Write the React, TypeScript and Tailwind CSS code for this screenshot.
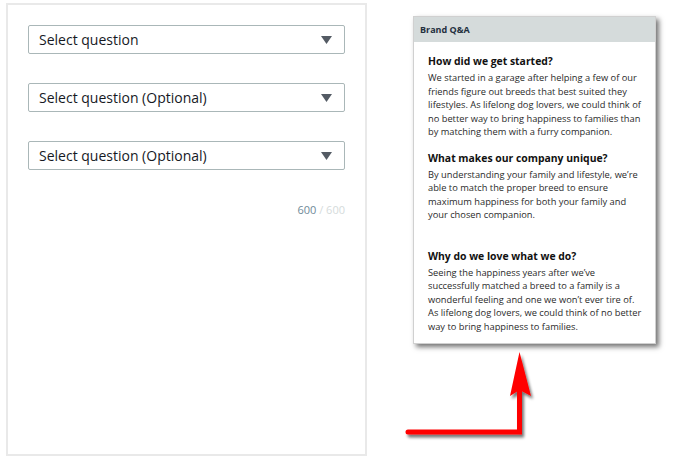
import React from "react";

const selects = ["Select question", "Select question (Optional)", "Select question (Optional)"];

const qa = [
  {
    q: "How did we get started?",
    lines: [
      "We started in a garage after helping a few of our",
      "friends figure out breeds that best suited they",
      "lifestyles. As lifelong dog lovers, we could think of",
      "no better way to bring happiness to families than",
      "by matching them with a furry companion.",
    ],
    mt: "mt-[11px]",
  },
  {
    q: "What makes our company unique?",
    lines: [
      "By understanding your family and lifestyle, we’re",
      "able to match the proper breed to ensure",
      "maximum happiness for both your family and",
      "your chosen companion.",
    ],
    mt: "mt-[11px]",
  },
  {
    q: "Why do we love what we do?",
    lines: [
      "Seeing the happiness years after we’ve",
      "successfully matched a breed to a family is a",
      "wonderful feeling and one we won’t ever tire of.",
      "As lifelong dog lovers, we could think of no better",
      "way to bring happiness to families.",
    ],
    mt: "mt-[26px]",
  },
];

function Arrow() {
  return (
    <svg width="140" height="100" viewBox="0 0 140 100" className="block">
      <defs>
        <filter id="sh" x="-20%" y="-20%" width="160%" height="160%">
          <feGaussianBlur in="SourceAlpha" stdDeviation="1.6" />
          <feOffset dx="2" dy="3" result="b" />
          <feComponentTransfer>
            <feFuncA type="linear" slope="0.55" />
          </feComponentTransfer>
          <feMerge>
            <feMergeNode />
            <feMergeNode in="SourceGraphic" />
          </feMerge>
        </filter>
      </defs>
      <g filter="url(#sh)">
        <path
          d="M8 82 H119.5 V38"
          fill="none"
          stroke="#ff0000"
          strokeWidth="5"
          strokeLinecap="round"
          strokeLinejoin="miter"
        />
        <path d="M119.5 2 L131 46 L119.5 40 L110 46 Z" fill="#ff0000" />
      </g>
    </svg>
  );
}

export default function App() {
  return (
    <div
      className="flex w-[696px] h-[459px] bg-white overflow-hidden"
      style={{ fontFamily: '"Open Sans", "Noto Sans", sans-serif' }}
    >
      {/* left form panel */}
      <div className="ml-[6px] mt-[3px] w-[361px] h-[453px] border-2 border-[#e9e9e9] px-[20px] pt-[20px]">
        <div className="flex flex-col gap-[29px]">
          {selects.map((s, i) => (
            <div
              key={i}
              className="h-[29px] flex items-center justify-between rounded-[2px] border border-[#aab7b8] pl-[10px] pr-[12px] text-[14px] text-[#16191f]"
            >
              <span>{s}</span>
              <svg width="11" height="8" viewBox="0 0 11 8">
                <path d="M0 0 H11 L5.5 8 Z" fill="#545b64" />
              </svg>
            </div>
          ))}
        </div>
        <div className="mt-[32px] text-right text-[11px] leading-[16px]">
          <span className="text-[#6f8a99]">600</span>
          <span className="text-[#d5dbdb]"> / 600</span>
        </div>
      </div>

      {/* right preview */}
      <div className="ml-[33px] flex flex-col">
        <div className="ml-[13px] mt-[16px] w-[243px] h-[328px] bg-white border border-[#d0d0d0] shadow-[3px_3px_5px_rgba(0,0,0,0.55)]">
          <div className="h-[25px] bg-[#d5dbdb] flex items-center pl-[6px] text-[9px] font-bold text-[#232f3e]">
            Brand Q&amp;A
          </div>
          <div className="pl-[14px] pr-[4px]">
            {qa.map((item, i) => (
              <div key={i} className={item.mt}>
                <div className="text-[10.4px] leading-[16px] font-bold text-[#111]">{item.q}</div>
                <p className="mt-[2px] text-[9.3px] leading-[13.5px] text-[#2a2a2a] whitespace-nowrap">
                  {item.lines.map((l, j) => (
                    <span key={j} className="block">
                      {l}
                    </span>
                  ))}
                </p>
              </div>
            ))}
          </div>
        </div>
        <div className="mt-[6px]">
          <Arrow />
        </div>
      </div>
    </div>
  );
}
